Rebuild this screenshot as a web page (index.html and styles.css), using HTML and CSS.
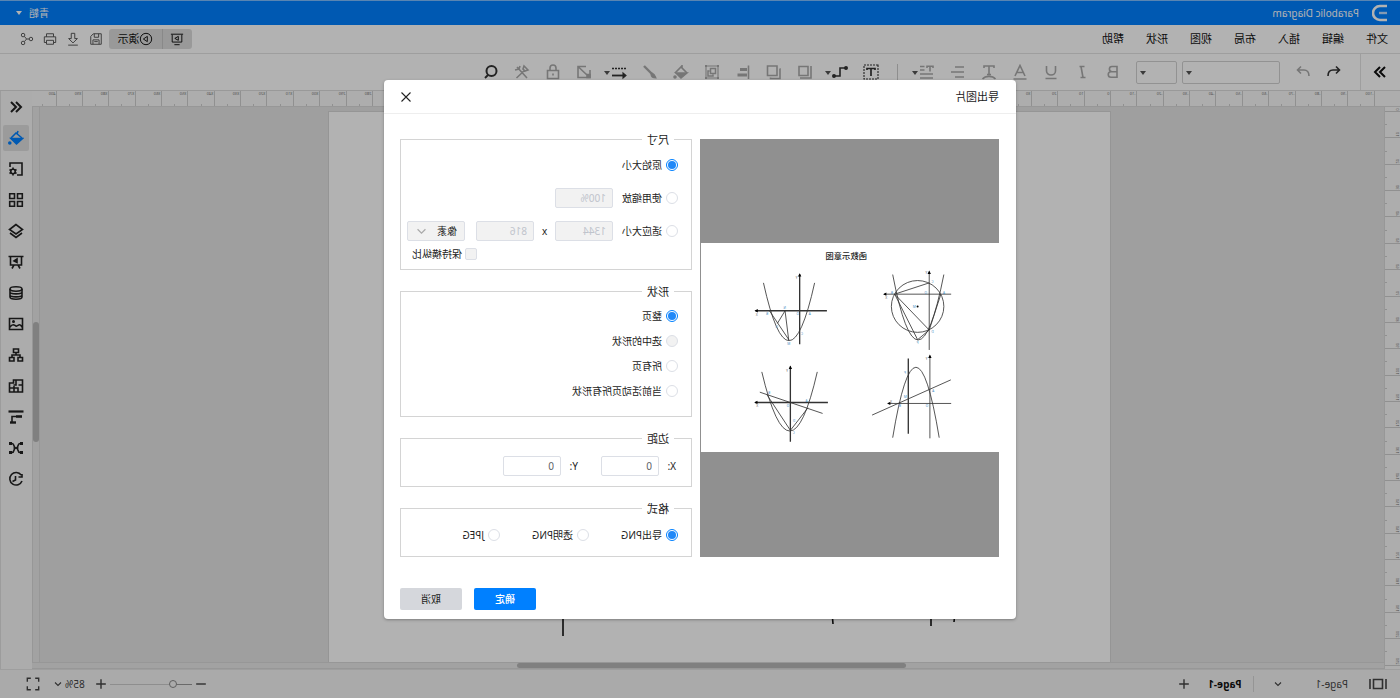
FILE: index.html
```html
<!DOCTYPE html>
<html lang="zh-CN">
<head>
<meta charset="utf-8">
<title>Parabolic Diagram</title>
<link rel="stylesheet" href="styles.css">
</head>
<body>
<div class="mirror">
<div class="app">
  <header class="titlebar">
    <svg class="logo" viewBox="0 0 16 18"><path d="M1 2h7a7 7 0 0 1 0 14H1" fill="none" stroke="#fff" stroke-width="2.600"/><path d="M1 9h8" stroke="#bcdcff" stroke-width="2.400"/></svg>
    <span class="doc-title">Parabolic Diagram</span>
    <button class="user">青韜<i class="caret caret-light"></i></button>
  </header>

  <div class="menubar">
    <nav class="menus">
      <button>文件</button><button>编辑</button><button>插入</button><button>布局</button><button>视图</button><button>形状</button><button>帮助</button>
    </nav>
    <div class="actions">
      <div class="present">
        <button class="present-a" aria-label="幻灯片"><svg class="icon" viewBox="0 0 16 16"><path d="M1 2.500h14M2.500 3v8.500h11V3M5 14.500h6"/><path d="M6.500 5v4.500l4-2.200z"/></svg></button>
        <button class="present-b"><svg class="icon" viewBox="0 0 16 16"><circle cx="8" cy="8" r="6.500"/><path d="M6.500 5v6l4.500-3z"/></svg>演示</button>
      </div>
      <button class="act" aria-label="保存"><svg class="icon" viewBox="0 0 16 16"><path d="M2 2h9l3 3v9H2zM5 2v4h5V2M4.500 14V9h7v5M6 11h4"/></svg></button>
      <button class="act" aria-label="下载"><svg class="icon" viewBox="0 0 16 16"><path d="M6 1.500h4v6h3l-5 5-5-5h3zM2.500 15h11"/></svg></button>
      <button class="act" aria-label="打印"><svg class="icon" viewBox="0 0 16 16"><path d="M4 5.500V2h8v3.500M4 12H1.500V5.500h13V12H12M4 9.500h8V14H4z"/></svg></button>
      <button class="act" aria-label="分享"><svg class="icon" viewBox="0 0 16 16"><circle cx="3.500" cy="8" r="2"/><circle cx="12.500" cy="3.500" r="2"/><circle cx="12.500" cy="12.500" r="2"/><path d="M5.500 8h3l2.500-3M8.500 8l2.500 3"/></svg></button>
    </div>
  </div>

  <div class="toolbar">
    <button class="tool collapse" aria-label="收起"><svg class="icon heavy" viewBox="0 0 16 16"><path d="M3 3l5 5-5 5M8 3l5 5-5 5"/></svg></button>
    <button class="tool dark" aria-label="撤销"><svg class="icon bold" viewBox="0 0 16 16"><path d="M6 2.500L2.500 6 6 9.500M3 6h6c3 0 5 2 5 6"/></svg></button>
    <button class="tool" aria-label="重做"><svg class="icon bold" viewBox="0 0 16 16"><path d="M10 2.500L13.500 6 10 9.500M13 6H7c-3 0-5 2-5 6"/></svg></button>
    <div class="combo combo-wide"><select aria-label="字体"><option></option></select><i class="caret"></i></div>
    <div class="combo combo-slim"><select aria-label="字号"><option></option></select><i class="caret"></i></div>
    <button class="tool" aria-label="加粗"><svg class="icon bold" viewBox="0 0 16 16"><path d="M4 2.500h5a2.600 2.600 0 0 1 0 5.200H4zM4 7.700h6a2.700 2.700 0 0 1 0 5.500H4z"/></svg></button>
    <button class="tool" aria-label="斜体"><svg class="icon bold" viewBox="0 0 16 16"><path d="M5.500 2.500h5M4.500 13.500h5M9 2.500l-2 11"/></svg></button>
    <button class="tool" aria-label="下划线"><svg class="icon bold" viewBox="0 0 16 16"><path d="M3.500 2v5a4.500 4 0 0 0 9 0V2M2.500 14.500h11"/></svg></button>
    <button class="tool" aria-label="字体颜色"><svg class="icon bold" viewBox="0 0 16 16"><path d="M3 12L8 1.500 13 12M4.500 8.500h7M1.500 15h13"/></svg></button>
    <button class="tool" aria-label="文字弯曲"><svg class="icon bold" viewBox="0 0 16 16"><path d="M3 4V2h10v2M8 2v8.500M6 10.500h4M1.500 15c3-3.500 10-3.500 13 0"/></svg></button>
    <button class="tool" aria-label="对齐"><svg class="icon bold" viewBox="0 0 16 16"><path d="M2 3h9M2 8h13M2 13h9"/></svg></button>
    <button class="tool drop" aria-label="行距"><svg class="icon" viewBox="0 0 16 16"><path d="M2 10h13M2 14h13M10.500 2.500h4.500M10.500 6h4.500M2 4V2.200h6V4M5 2v5.500" stroke-width="1.600"/></svg><i class="caret"></i></button>
    <span class="sep"></span>
    <button class="tool dark" aria-label="文本框"><svg class="icon" viewBox="0 0 16 16"><path d="M1 1h14v14H1z" stroke-dasharray="2 1"/><path d="M4 6V4.500h8V6M8 4.500V12" stroke-width="1.700"/></svg></button>
    <button class="tool dark drop spaced" aria-label="连接线"><svg class="icon bold" viewBox="0 0 16 16"><path d="M2 4h6v8h5"/><circle cx="2" cy="4" r="1.200" fill="currentColor"/><circle cx="14" cy="12" r="1.200" fill="currentColor"/></svg><i class="caret"></i></button>
    <button class="tool" aria-label="置底"><svg class="icon bold" viewBox="0 0 16 16"><path d="M5 2.500h9v9H5zM2 2v12h11"/></svg></button>
    <button class="tool" aria-label="置顶"><svg class="icon bold" viewBox="0 0 16 16"><path d="M2.500 5H2v9.500h9.500v-1M5 2h9.500v9.500H5z"/></svg></button>
    <button class="tool" aria-label="排列"><svg class="icon" viewBox="0 0 16 16"><path d="M2.500 1.500v13.500" stroke-width="1.600"/><path d="M4 5.500h7M4 11h9.500" stroke-width="3.200"/></svg></button>
    <button class="tool" aria-label="组合"><svg class="icon" viewBox="0 0 16 16"><path d="M2 2h12v12H2z"/><path d="M1 1h2v2H1zM13 1h2v2h-2zM1 13h2v2H1zM13 13h2v2h-2z" fill="currentColor" stroke="none"/><path d="M4.500 4.500h5v5h-5zM10.500 7h1.500v5H7v-1.500" stroke-width="1.500"/></svg></button>
    <button class="tool" aria-label="填充"><svg class="icon bold" viewBox="0 0 16 16"><path d="M7 1v3M2 9l6-6 6 6"/><path d="M2 9h11l-5 5z" fill="currentColor"/><circle cx="14" cy="13" r="1" fill="currentColor"/></svg></button>
    <button class="tool" aria-label="格式刷"><svg class="icon" viewBox="0 0 16 16"><path d="M14 2L6 10" stroke-width="2.400"/><path d="M6 9l1 1c0 3-2 4-5 4 1-2 1-4 4-5z" fill="currentColor"/></svg></button>
    <button class="tool dark drop spaced" aria-label="线型"><svg class="icon" viewBox="0 0 16 16"><path d="M1 4.500h14" stroke-dasharray="2 1" stroke-width="1.500"/><path d="M2 11.500h13" stroke-width="1.800"/><path d="M4 9l-3 2.500L4 14z" fill="currentColor"/></svg><i class="caret"></i></button>
    <button class="tool" aria-label="画笔"><svg class="icon bold" viewBox="0 0 16 16"><path d="M6 2.500h8v11H2V6M14 2.500L5 11"/><path d="M2 10.500h3v3H2z" fill="currentColor"/></svg></button>
    <button class="tool" aria-label="锁定"><svg class="icon bold" viewBox="0 0 16 16"><path d="M2.500 6.500h11v8h-11zM5 6.500V4a3 3 0 0 1 6 0v2.500M8 9.500v2"/></svg></button>
    <button class="tool" aria-label="工具"><svg class="icon bold" viewBox="0 0 16 16"><path d="M5 6l8.500 8M13 3L3 14M2 6l4-4 1 3-2 2zM10 2l1 3 4 1"/></svg></button>
    <button class="tool dark" aria-label="查找"><svg class="icon heavy" viewBox="0 0 16 16"><circle cx="7.500" cy="7" r="5"/><path d="M11 11l3 3"/></svg></button>
  </div>

  <main class="workspace">
    <svg class="ruler-top" aria-hidden="true"></svg>
    <svg class="ruler-left" aria-hidden="true"></svg>
    <div class="canvas">
      <div class="page">
        <svg class="page-drawing" viewBox="0 0 783 552"><path d="M547 500v24M155 500l1 10M179 500v14M278 500l-1 12" fill="none" stroke="#111" stroke-width="1.600"/></svg>
      </div>
    </div>
    <div class="vscroll"><span class="vthumb"></span></div>
    <div class="hscroll"><span class="hthumb"></span></div>
    <aside class="sidebar">
      <button aria-label="展开"><svg class="icon heavy" viewBox="0 0 16 16"><path d="M8 3L3 8l5 5M13 3L8 8l5 5"/></svg></button>
      <button class="active" aria-label="填充"><svg class="icon bold" viewBox="0 0 16 16"><path d="M6 1l1 3M2 8l6-5 5 5"/><path d="M1.500 8.500h11.500l-5.500 5.500z" fill="currentColor"/><circle cx="14.200" cy="13" r="1" fill="currentColor"/></svg></button>
      <button aria-label="页面设置"><svg class="icon bold" viewBox="0 0 16 16"><path d="M7 14H2V2h12v4"/><circle cx="11" cy="10.500" r="2.200"/><path d="M11 6.500v2M11 12.500v2M7.500 8.500l1.500 1M13 11.500l1.500 1M14.500 8.500l-1.500 1M9 11.500l-1.500 1"/></svg></button>
      <button aria-label="符号"><svg class="icon bold" viewBox="0 0 16 16"><path d="M1.700 1.700h4.800v4.800H1.700zM9.500 1.700h4.800v4.800H9.500zM1.700 9.500h4.800v4.800H1.700zM9.500 9.500h4.800v4.800H9.500z"/></svg></button>
      <button aria-label="图层"><svg class="icon bold" viewBox="0 0 16 16"><path d="M8 1.500L14.500 6.500 8 11 1.500 6.500zM2 10l6 4.500 6-4.500"/></svg></button>
      <button aria-label="演示"><svg class="icon bold" viewBox="0 0 16 16"><path d="M.5 2.500h15M2.500 2.500v8.500h11V2.500M6 11l-2 3.500M10 11l2 3.500"/><path d="M7 5v3.500L10 7z" fill="currentColor"/></svg></button>
      <button aria-label="数据"><svg class="icon bold" viewBox="0 0 16 16"><ellipse cx="8" cy="4" rx="6" ry="2.200"/><path d="M2 4v8c0 3 12 3 12 0V4M2 7c0 2.500 12 2.500 12 0M2 10c0 2.500 12 2.500 12 0"/></svg></button>
      <button aria-label="图片"><svg class="icon bold" viewBox="0 0 16 16"><path d="M1.500 2.500h13v11h-13zM2 11c3-5 4 0 6-1s3-3 6 1"/><circle cx="10.500" cy="5.500" r=".7"/></svg></button>
      <button aria-label="组织结构"><svg class="icon bold" viewBox="0 0 16 16"><path d="M5.500 2h5v3.500h-5zM1.500 10.500h4.500V14H1.500zM10 10.500h4.500V14H10zM8 5.500V8M4 10.500V8h8v2.500"/></svg></button>
      <button aria-label="平面图"><svg class="icon bold" viewBox="0 0 16 16"><path d="M1.500 2h9v3h4v9h-13zM1.500 7h4M8 2v5h2.500M6 14v-4h4M10 10h4.500M10 14V8"/></svg></button>
      <button aria-label="甘特图"><svg class="icon bold" viewBox="0 0 16 16"><path d="M.5 2.500h15" stroke-width="2.200"/><path d="M2 7.500h6" stroke-width="2.600"/><path d="M8 7.500h4v6"/><path d="M8 13.500h6" stroke-width="2.400"/></svg></button>
      <button aria-label="思维导图"><svg class="icon bold" viewBox="0 0 16 16"><path d="M1 3.500h3M12 3.500h3M1 12.500h3M12 12.500h3" stroke-width="3.200"/><path d="M4 3.500c3 0 1 4.500 4 4.500s1-4.500 4-4.500M4 12.500c3 0 1-4.500 4-4.500s1 4.500 4 4.500M5.500 8h5"/></svg></button>
      <button aria-label="历史"><svg class="icon bold" viewBox="0 0 16 16"><path d="M2.800 4A6.300 6.300 0 1 1 2 10M2 3v3h3.500M8.500 5v4l3 1.500"/></svg></button>
    </aside>
  </main>

  <footer class="statusbar">
    <button class="st page-view" aria-label="页面视图"><svg class="icon bold wide" viewBox="0 0 18 16"><path d="M1 3v10M17 3v10M4.500 3.500h9v9h-9z"/></svg></button>
    <button class="page-pick"><span>Page-1</span><svg class="chev" viewBox="0 0 8 8"><path d="M1 2.500l3 3 3-3"/></svg></button>
    <a class="page-tab" href="#page-1">Page-1</a>
    <button class="st" aria-label="添加页面"><svg class="icon bold" viewBox="0 0 16 16"><path d="M8 2.500v11M2.500 8h11"/></svg></button>
    <div class="zoom">
      <button class="st-mini" aria-label="缩小"><svg class="icon bold" viewBox="0 0 16 16"><path d="M2.500 8h11"/></svg></button>
      <input class="slider" type="range" min="0" max="100" value="20" aria-label="缩放">
      <button class="st-mini" aria-label="放大"><svg class="icon bold" viewBox="0 0 16 16"><path d="M8 2.500v11M2.500 8h11"/></svg></button>
      <button class="percent">85%<svg class="chev" viewBox="0 0 8 8"><path d="M1 2.500l3 3 3-3"/></svg></button>
      <button class="st" aria-label="全屏"><svg class="icon bold" viewBox="0 0 16 16"><path d="M1.500 5.500v-4h4M10.500 1.500h4v4M14.500 10.500v4h-4M5.500 14.500h-4v-4"/></svg></button>
    </div>
  </footer>
</div>

<div class="overlay">
  <div class="dialog" role="dialog" aria-labelledby="dlg-title">
    <div class="dialog-head">
      <h1 id="dlg-title">导出图片</h1>
      <button class="close" aria-label="关闭"><svg viewBox="0 0 10 10"><path d="M.5.5l9 9M9.500.5l-9 9"/></svg></button>
    </div>
    <div class="dialog-body">
      <div class="preview">
        <svg class="preview-img" viewBox="0 0 897 631">
          <rect width="897" height="631" fill="#fff"/>
          <g class="plot" transform="translate(928 -38) scale(-1 1)">
            <path d="M219 158Q296 506 373 158M237 242L296 330M261 280L284 242L295 330"/>
            <path class="axis" d="M195 242H410M328 132V343"/>
            <path d="M608 133Q684 527 762 133M614 192L718 158M614 192L718 300M614 192L683 329L718 300L753 192"/>
            <ellipse cx="683" cy="229" rx="79" ry="78"/>
            <path d="M582 192H784M718 124V360"/>
            <path d="M214 426Q299 782 381 426M208 487L397 551M229 494L300 602L353 534"/>
            <path class="axis" d="M194 518H413M300 410V636"/>
            <path d="M608 624Q678 200 748 624M546 556L783 450M595 521H784M720 377V626"/>
            <path class="axis" d="M655 386V612"/>
            <path class="head" d="M192 242l10-5v10zM328 129l-5 10h10zM579 192l10-5v10zM718 121l-5 10h10zM191 518l10-5v10zM300 407l-5 10h10zM591 521l10-5v10zM720 374l-5 10h10z"/>
            <circle class="head" cx="683" cy="229" r="3"/>
          </g>
          <text class="plot-title" x="460" y="47">函数示意图</text>
          <g class="pts">
            <text x="698" y="216">B</text><text x="645" y="199">N</text><text x="606" y="216">O</text><text x="570" y="216">A</text><text x="669" y="255">G</text><text x="593" y="276">C</text><text x="633" y="306">M</text>
            <text x="200" y="121">C</text><text x="221" y="153">O</text><text x="166" y="153">A</text><text x="322" y="153">B</text><text x="255" y="196">M</text><text x="200" y="270">D</text><text x="245" y="304">P</text>
            <text x="692" y="454">B</text><text x="580" y="478">A</text><text x="635" y="495">O</text><text x="618" y="576">C</text><text x="617" y="540">D</text>
            <text x="283" y="393">P</text><text x="282" y="468">M</text><text x="298" y="494">B</text><text x="198" y="448">A</text><text x="217" y="494">O</text>
          </g>
          <g class="axis-name">
            <text x="609" y="109">Y</text><text x="729" y="220">X</text><text x="219" y="93">Y</text><text x="339" y="169">X</text><text x="638" y="388">Y</text><text x="728" y="493">X</text><text x="218" y="353">Y</text><text x="325" y="482">X</text>
          </g>
        </svg>
      </div>
      <form class="options">
        <fieldset class="size">
          <legend>尺寸</legend>
          <div class="row"><label class="opt"><input type="radio" name="size" checked>原始大小</label></div>
          <div class="row"><label class="opt"><input type="radio" name="size">使用缩放</label><input class="box" type="text" value="100%" aria-label="缩放比例" disabled></div>
          <div class="row"><label class="opt"><input type="radio" name="size">适应大小</label><input class="box" type="text" value="1344" aria-label="宽" disabled><span class="times">x</span><input class="box" type="text" value="816" aria-label="高" disabled>
            <div class="unit"><select aria-label="单位"><option>像素</option></select><svg class="chev" viewBox="0 0 8 8"><path d="M.5 2l3.500 3.500L7.500 2"/></svg></div>
          </div>
          <label class="keep"><input type="checkbox" disabled>保持横纵比</label>
        </fieldset>
        <fieldset class="shape">
          <legend>形状</legend>
          <label class="opt"><input type="radio" name="shape" checked>整页</label>
          <label class="opt"><input type="radio" name="shape" disabled>选中的形状</label>
          <label class="opt"><input type="radio" name="shape">所有页</label>
          <label class="opt"><input type="radio" name="shape">当前活动页所有形状</label>
        </fieldset>
        <fieldset class="margin">
          <legend>边距</legend>
          <div class="pair"><label for="mx">X:</label><input class="box" id="mx" type="text" value="0"></div>
          <div class="pair"><label for="my">Y:</label><input class="box" id="my" type="text" value="0"></div>
        </fieldset>
        <fieldset class="format">
          <legend>格式</legend>
          <label class="opt"><input type="radio" name="fmt" checked>导出PNG</label>
          <label class="opt"><input type="radio" name="fmt">透明PNG</label>
          <label class="opt"><input type="radio" name="fmt">JPEG</label>
        </fieldset>
      </form>
    </div>
    <div class="dialog-foot">
      <button class="btn primary">确定</button>
      <button class="btn">取消</button>
    </div>
  </div>
</div>
</div>
<script src="ruler.js"></script>
</body>
</html>
```
FILE: styles.css
```css
* { box-sizing: border-box; }
body {
  margin: 0;
  font: 10px/16px "Noto Sans", "Noto Sans CJK SC", sans-serif;
  color: #222;
}
button, input, select { font: inherit; color: inherit; margin: 0; }
button { border: 0; padding: 0; background: none; display: flex; align-items: center; justify-content: center; }

/* The whole interface is shown flipped left to right. */
.mirror { position: relative; transform: scaleX(-1); min-height: 100vh; overflow: hidden; }
.app { display: flex; flex-direction: column; height: 100vh; background: #fff; }

.icon { width: 14px; height: 14px; flex: none; fill: none; stroke: currentColor; stroke-width: 1.1; }
.icon.bold { stroke-width: 1.6; }
.icon.heavy { stroke-width: 2; }
.icon.wide { width: 18px; height: 16px; }
.chev { width: 8px; height: 8px; fill: none; stroke: currentColor; stroke-width: 1.1; }
.caret { border: 3px solid transparent; border-top: 4px solid #555; border-bottom: 0; }
.caret-light { border-top-color: #fff; }

.titlebar { display: flex; align-items: center; flex: none; height: 25px; padding: 0 16px 0 12px; background: #0080ff; border-top: 1px solid #80bfff; color: #fff; }
.logo { width: 16px; height: 18px; }
.doc-title { margin-left: 13px; }
.user { margin-left: auto; gap: 7px; }

.menubar { display: flex; align-items: center; flex: none; height: 29px; padding: 0 16px 0 12px; border-bottom: 1px solid #e2e2e2; }
.menus { display: flex; gap: 22px; font-size: 11px; color: #111; }
.actions { display: flex; align-items: center; margin-left: auto; color: #555; }
.present { display: flex; margin-right: 1px; background: #dcdcdc; border-radius: 3px; color: #111; overflow: hidden; }
.present-a { width: 30px; height: 20px; border-right: 1px solid #c4c4c4; }
.present-b { width: 53px; height: 20px; font-size: 11px; }
.act { width: 23px; height: 20px; }

.toolbar { display: flex; align-items: center; flex: none; height: 37px; border-bottom: 1px solid #dcdcdc; color: #aaa; }
.toolbar .icon { width: 16px; height: 16px; }
.tool { position: relative; width: 31px; height: 24px; flex: none; }
.tool.dark { color: #333; }
.tool.collapse { width: 40px; height: 36px; margin-right: 10px; border-right: 1px solid #e2e2e2; color: #111; }
.tool.spaced { margin-right: 4px; }
.tool .caret { position: absolute; right: 0; top: 11px; }
.combo { position: relative; flex: none; height: 23px; }
.combo-wide { width: 98px; margin-left: 8px; }
.combo-slim { width: 41px; margin: 0 7px 0 5px; }
.combo select, .unit select { appearance: none; width: 100%; height: 100%; border: 1px solid #d2d2d2; border-radius: 2px; background: #fff; }
.combo .caret { position: absolute; right: 4px; top: 10px; }
.sep { width: 1px; height: 16px; margin: 0 10px 0 14px; background: #ccc; }

.workspace { display: grid; flex: 1; min-height: 0; grid-template: 16px minmax(0, 1fr) 7px / 16px minmax(0, 1fr) 8px 32px; background: #f8f8f8; }
.ruler-top { grid-area: 1 / 1 / 2 / 4; width: 100%; height: 16px; border-bottom: 1px solid #d8d8d8; }
.ruler-left { grid-area: 2 / 1 / 4 / 2; width: 16px; height: 100%; border-right: 1px solid #d8d8d8; }
.tick { stroke: #cfcfcf; }
.tick-label { font-size: 4px; fill: #777; }
.canvas { grid-area: 2 / 2; display: flex; justify-content: center; padding: 4px 0 0 0; background: #e4e4e4; overflow: hidden; }
.page { width: 783px; margin-right: 15px; border: 1px solid #d6d6d6; border-bottom: 0; background: #fff; overflow: hidden; }
.page-drawing { width: 783px; height: 552px; }
.vscroll { grid-area: 2 / 3; padding: 215px 0 0 0; background: #e8e8e8; border: 1px solid #d8d8d8; border-width: 0 1px; }
.vthumb { display: block; height: 120px; border-radius: 3px; background: #b8b8b8; }
.hscroll { grid-area: 3 / 2 / 4 / 4; background: #e8e8e8; border: 1px solid #d8d8d8; border-width: 1px 0; padding-left: 478px; }
.hthumb { display: block; width: 389px; height: 5px; border-radius: 3px; background: #b8b8b8; }
.sidebar { grid-area: 1 / 4 / 4 / 5; display: flex; flex-direction: column; align-items: center; gap: 5px; padding-top: 3px; border-right: 1px solid #e0e0e0; background: #f6f6f6; }
.sidebar button { width: 26px; height: 26px; flex: none; border-radius: 2px; }
.sidebar .icon { width: 16px; height: 16px; }
.sidebar .active { background: #dedede; color: #0080ff; }

.statusbar { display: flex; align-items: center; flex: none; height: 29px; padding: 0 20px 0 12px; border-top: 1px solid #e2e2e2; background: #f4f4f4; color: #444; }
.st { width: 26px; height: 20px; justify-content: center; }
.page-view { width: 20px; }
.page-pick { gap: 34px; padding: 0 20px; border-right: 1px solid #d6d6d6; }
.page-tab { margin: 0 11px; color: #111; font-weight: 700; text-decoration: none; }
.zoom { display: flex; align-items: center; margin-left: auto; }
.st-mini { width: 18px; height: 20px; }
.percent { margin: 0 8px 0 7px; gap: 3px; }
.slider { appearance: none; width: 82px; height: 8px; background: linear-gradient(#999, #999) 0 50% / 20% 1px no-repeat, linear-gradient(#ccc, #ccc) 0 50% / 100% 1px no-repeat; }
.slider::-webkit-slider-thumb { appearance: none; width: 8px; height: 8px; border: 1px solid #888; border-radius: 50%; background: #f4f4f4; }

.overlay { position: absolute; inset: 0; display: flex; align-items: center; justify-content: center; background: rgba(0, 0, 0, .3); }
.dialog { width: 632px; max-width: 96%; border-radius: 4px; background: #fff; box-shadow: 0 1px 3px rgba(0, 0, 0, .3); }
.dialog-head { display: flex; align-items: center; justify-content: space-between; height: 34px; padding: 2px 17px 0; border-bottom: 1px solid #eee; }
.dialog-head h1 { margin: 0; font-size: 11px; font-weight: 400; }
.close svg { width: 10px; height: 10px; fill: none; stroke: #222; stroke-width: 1.1; }
.dialog-body { display: flex; gap: 8px; padding: 17px 16px 0 17px; }
.preview { flex: 1; display: flex; align-items: center; margin-top: 8px; padding-right: 1px; background: #909090; }
.preview-img { width: 100%; }
.plot { fill: none; stroke: #333; stroke-width: 2.5; }
.plot .axis { stroke-width: 4; }
.plot .head { fill: #000; stroke: none; }
.plot-title { font-size: 25px; font-weight: 500; text-anchor: middle; fill: #222; }
.pts, .axis-name { font-size: 10px; text-anchor: middle; fill: #4a90c4; }
.axis-name { fill: #666; }

.options { width: 292px; display: flex; flex-direction: column; gap: 14px; padding-top: 1px; }
fieldset { min-width: 0; margin: 0; border: 1px solid #d4d4d4; padding: 0 0 0 13px; }
legend { margin-left: 4px; padding: 0 5px; font-size: 11px; line-height: 16px; }
.opt, .keep { display: flex; align-items: center; gap: 4px; height: 20px; }
.opt input, .keep input { appearance: none; display: grid; place-content: center; width: 12px; height: 12px; border: 1px solid #dcdfe6; border-radius: 50%; background: #fff; }
.opt input:checked { border-color: #0080ff; }
.opt input:checked::before { content: ""; width: 8px; height: 8px; border-radius: 50%; background: #2088f8; }
.opt input:disabled, .keep input:disabled { background: #f2f2f2; }
.keep input { border-radius: 2px; }
.row { display: flex; align-items: center; height: 20px; margin-bottom: 13px; }
.size { height: 138px; }
.size legend { margin-bottom: 7px; }
.size .row .box { margin-left: 9px; }
.size .row .times + .box { margin-left: 0; }
.box { width: 58px; height: 20px; padding: 0 6px; border: 1px solid #dcdfe6; border-radius: 2px; background: #fff; color: #606266; }
.box:disabled { background: #f2f2f2; color: #c0c4cc; }
.times { width: 21px; text-align: center; }
.unit { position: relative; width: 58px; height: 20px; margin-left: 11px; }
.unit select { padding: 0 7px; border-color: #dcdfe6; background: #f2f2f2; }
.unit .chev { position: absolute; right: 10px; top: 6px; width: 9px; height: 9px; stroke: #aaa; }
.keep { width: max-content; margin: -10px 0 0 201px; gap: 3px; }
.shape { height: 133px; }
.shape .opt { margin-bottom: 5px; }
.shape legend { margin-bottom: 6px; }
.margin, .format { display: flex; height: 56px; }
.margin { gap: 23px; padding: 9px 0 0 15px; }
.margin legend { margin-left: 2px; }
.pair { display: flex; align-items: center; gap: 7px; }
.pair label { width: 10px; }
.format { padding-top: 8px; }
.format .opt { width: 89px; }

.dialog-foot { display: flex; justify-content: flex-end; gap: 12px; padding: 31px 16px 9px; }
.btn { width: 62px; height: 22px; border-radius: 2px; background: #d5d7dc; }
.primary { background: #0080ff; color: #fff; font-weight: 500; }
```
FILE: ruler.js
```js
// Draws ruler ticks; ten units take STEP pixels.
const STEP = 26.36;
const NS = "http://www.w3.org/2000/svg";

function add(svg, tag, attrs, text) {
  const el = document.createElementNS(NS, tag);
  for (const key in attrs) el.setAttribute(key, attrs[key]);
  if (text !== undefined) el.textContent = text;
  svg.appendChild(el);
}

function drawTop(svg, origin) {
  const width = svg.clientWidth;
  for (let i = -10; origin + i * STEP < width; i++) {
    const x = Math.round(origin + i * STEP) + 0.5;
    const half = Math.round(origin + (i + 0.5) * STEP) + 0.5;
    add(svg, "line", { class: "tick", x1: x, x2: x, y1: 0, y2: 16 });
    add(svg, "line", { class: "tick", x1: half, x2: half, y1: 13, y2: 16 });
    add(svg, "text", { class: "tick-label", x: x + 1, y: 4 }, i * 10);
  }
}

function drawLeft(svg, origin) {
  const height = svg.clientHeight;
  for (let i = 0; origin + i * STEP < height; i++) {
    const y = Math.round(origin + i * STEP) + 0.5;
    const half = Math.round(origin + (i + 0.5) * STEP) + 0.5;
    add(svg, "line", { class: "tick", x1: 0, x2: 16, y1: y, y2: y });
    add(svg, "line", { class: "tick", x1: 13, x2: 16, y1: half, y2: half });
    add(svg, "text", { class: "tick-label", transform: `translate(4 ${y - 1}) rotate(-90)` }, i * 10);
  }
}

const page = document.querySelector(".page");
drawTop(document.querySelector(".ruler-top"), page.offsetLeft);
drawLeft(document.querySelector(".ruler-left"), 4);
```
